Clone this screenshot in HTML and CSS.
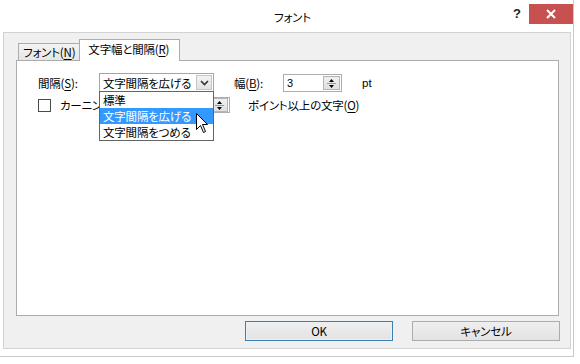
FILE: index.html
```html
<!DOCTYPE html>
<html lang="ja">
<head>
    <meta charset="UTF-8">
    <title>フォント</title>
    <link rel="stylesheet" href="styles.css">
</head>
<body>

<div class="window">
    <div class="titlebar">
        <span class="title">フォント</span>
        <span class="help">?</span>
        <span class="close">
            <svg width="10" height="10" viewBox="0 0 10 10"><path d="M1 1 L9 9 M9 1 L1 9" stroke="#fff" stroke-width="2"/></svg>
        </span>
    </div>

    <div class="client">
        <div class="tabs">
            <div class="tab">フォント(<u>N</u>)</div>
            <div class="tab active">文字幅と間隔(<u>R</u>)</div>
        </div>

        <div class="panel">
            <!-- spacing row -->
            <div class="row">
                <span class="label label-spacing">間隔(<u>S</u>):</span>
                <div class="combo">
                    <span class="combo-text">文字間隔を広げる</span>
                    <span class="combo-btn">
                        <svg width="9" height="6" viewBox="0 0 9 6"><path d="M1 1 L4.5 4.5 L8 1" fill="none" stroke="#333" stroke-width="1.6"/></svg>
                    </span>
                    <ul class="combo-list">
                        <li>標準</li>
                        <li class="selected">文字間隔を広げる</li>
                        <li>文字間隔をつめる</li>
                    </ul>
                    <svg class="cursor" width="13" height="21" viewBox="0 0 13 21">
                        <path d="M0.5 0.5 L0.5 16.5 L4.5 12.5 L7.5 19.5 L9.5 18.5 L6.5 11.5 L11.5 11.5 Z" fill="#fff" stroke="#000" stroke-width="1"/>
                    </svg>
                </div>
                <span class="label label-width">幅(<u>B</u>):</span>
                <div class="spin spin-width">
                    <span class="spin-value">3</span>
                    <span class="spin-btn">
                        <svg width="15" height="13" viewBox="0 0 15 13"><path d="M5 5 L7.5 2 L10 5 Z M5 8 L10 8 L7.5 11 Z" fill="#000"/><path d="M3 6.5 H12" stroke="#999" stroke-width="1"/></svg>
                    </span>
                </div>
                <span class="unit">pt</span>
            </div>

            <!-- kerning row (partly covered by the open list) -->
            <div class="row row-kerning">
                <span class="checkbox"></span>
                <span class="label label-kerning">カーニング</span>
                <div class="spin spin-kerning">
                    <span class="spin-value"></span>
                    <span class="spin-btn">
                        <svg width="15" height="13" viewBox="0 0 15 13"><path d="M5 5 L7.5 2 L10 5 Z M5 8 L10 8 L7.5 11 Z" fill="#000"/><path d="M3 6.5 H12" stroke="#999" stroke-width="1"/></svg>
                    </span>
                </div>
                <span class="label label-points">ポイント以上の文字(<u>O</u>)</span>
            </div>
        </div>

        <div class="buttons">
            <button class="btn btn-default">OK</button>
            <button class="btn">キャンセル</button>
        </div>
    </div>
</div>

</body>
</html>
```

FILE: styles.css
```css
body {
    margin: 0;
    padding: 0;
    background-color: #ffffff;
    font-family: "Noto Sans CJK JP", "Noto Sans", sans-serif;
    font-size: 11.5px;
    letter-spacing: -0.2px;
    font-feature-settings: "palt";
    color: #000;
    overflow: hidden;
}
u {
    text-underline-offset: 2px;
}
.window {
    width: 574px;
    height: 357px;
    box-sizing: border-box;
    background-color: #ffffff;
    border-right: 1px solid #c9c9c9;
    border-bottom: 1px solid #c9c9c9;
}
.titlebar {
    display: flex;
    align-items: flex-start;
    height: 32px;
}
.title {
    flex: 1;
    padding-left: 72px;
    padding-top: 9px;
    text-align: center;
    line-height: 16px;
}
.help {
    width: 6px;
    margin-right: 10px;
    padding-top: 6px;
    font-family: "Liberation Sans", sans-serif;
    font-weight: bold;
    font-size: 13px;
    line-height: 16px;
    color: #222;
}
.close {
    display: flex;
    align-items: center;
    justify-content: center;
    width: 44px;
    height: 20px;
    margin-top: 4px;
    background-color: #c75050;
}
.client {
    height: 317px;
    box-sizing: border-box;
    margin: 0 2px 0 3px;
    padding: 6px 11px 0 12px;
    background-color: #f0f0f0;
    border: 1px solid #d2d2d2;
}
.tabs {
    display: flex;
    align-items: flex-end;
    height: 21px;
    padding-left: 2px;
}
.tab {
    height: 16px;
    padding: 0 4px;
    line-height: 16px;
    white-space: nowrap;
    background: linear-gradient(#f3f3f3, #e6e6e6);
    border: 1px solid #acacac;
    border-bottom: none;
}
.tab.active {
    position: relative;
    height: 21px;
    margin-bottom: -1px;
    margin-left: -1px;
    padding: 0 10px 0 8px;
    line-height: 19px;
    background: #ffffff;
}
.panel {
    height: 256px;
    box-sizing: border-box;
    padding: 12px 20px 0 21px;
    background-color: #ffffff;
    border: 1px solid #acacac;
}
.row {
    display: flex;
    align-items: center;
    height: 19px;
}
.row-kerning {
    height: 16px;
    margin-top: 5px;
}
.label {
    line-height: 16px;
    white-space: nowrap;
}
.label-spacing {
    width: 61px;
}
.label-width {
    width: 49px;
    margin-left: 20px;
}
.unit {
    margin-left: 20px;
    font-family: "Liberation Sans", sans-serif;
    letter-spacing: 0;
}
.combo {
    position: relative;
    z-index: 2;
    display: flex;
    align-items: center;
    width: 115px;
    height: 19px;
    box-sizing: border-box;
    padding: 0 1px 0 3px;
    border: 1px solid #a5a5a5;
    background: #ffffff;
}
.combo-text {
    flex: 1;
    line-height: 16px;
    white-space: nowrap;
    overflow: hidden;
}
.combo-btn {
    display: flex;
    align-items: center;
    justify-content: center;
    flex-shrink: 0;
    width: 16px;
    height: 15px;
    box-sizing: border-box;
    background: linear-gradient(#f2f2f2, #e2e2e2);
    border: 1px solid #c4c4c4;
}
.combo-list {
    position: absolute;
    top: 17px;
    left: -1px;
    width: 115px;
    margin: 0;
    padding: 0;
    box-sizing: border-box;
    list-style: none;
    background: #ffffff;
    border: 1px solid #646464;
}
.combo-list li {
    height: 16px;
    padding-left: 3px;
    line-height: 16px;
    white-space: nowrap;
}
.combo-list li.selected {
    background-color: #3399ff;
    color: #ffffff;
}
.cursor {
    position: absolute;
    top: 39px;
    left: 96px;
}
.spin {
    display: flex;
    align-items: center;
    height: 18px;
    box-sizing: border-box;
    padding: 0 1px 0 3px;
    border: 1px solid #abadb3;
    background: #ffffff;
}
.spin-width {
    width: 59px;
}
.spin-value {
    flex: 1;
    font-family: "Liberation Sans", sans-serif;
    font-size: 11px;
}
.spin-btn {
    display: flex;
    width: 17px;
    height: 14px;
    box-sizing: border-box;
    background: linear-gradient(#f0f0f0, #e0e0e0);
    border: 1px solid #b5b5b5;
}
.spin-btn svg {
    margin: 0 auto;
}
.checkbox {
    width: 13px;
    height: 13px;
    margin-right: 9px;
    box-sizing: border-box;
    border: 1px solid #4a4a4a;
    background: #ffffff;
}
.label-kerning {
    width: 39px;
    margin-right: 61px;
    overflow: hidden;
}
.spin-kerning {
    width: 70px;
    height: 16px;
}
.spin-kerning .spin-btn {
    height: 14px;
}
.label-points {
    margin-left: 18px;
}
.buttons {
    display: flex;
    justify-content: flex-end;
    gap: 19px;
    margin-top: 5px;
    margin-right: -1px;
}
.btn {
    width: 148px;
    height: 20px;
    padding: 0;
    font-family: "Noto Sans CJK JP", "Noto Sans", sans-serif;
    font-size: 11.5px;
    letter-spacing: -0.2px;
    font-feature-settings: "palt";
    line-height: 16px;
    color: #000;
    background: linear-gradient(#efefef, #e3e3e3);
    border: 1px solid #acacac;
}
.btn-default {
    border-color: #3c7fb1;
    box-shadow: inset 0 0 0 1px #e8f0f8;
}
```
